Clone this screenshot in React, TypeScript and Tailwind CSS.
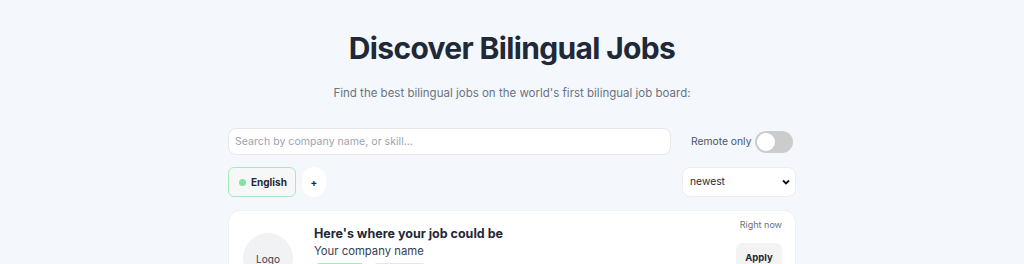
import React from "react";

export default function App() {
  return (
    <div className="min-h-screen bg-[#f4f8fc] pt-[30px]" style={{ fontFamily: "Inter, 'Noto Sans', sans-serif" }}>
      <h1 className="text-center text-[30px] leading-[36px] font-bold tracking-[-0.022em] text-[#1f2937]">Discover Bilingual Jobs</h1>
      <p className="mt-[17px] text-center text-[11.5px] leading-[20px] text-[#6b7280]">
        Find the best bilingual jobs on the world's first bilingual job board:
      </p>
      <div className="mx-auto mt-[25px] w-[568px]">
        <div className="flex items-center">
          <input
            className="h-[27px] w-[443px] rounded-lg border border-[#e5e7eb] bg-white px-[6px] text-[10.6px] text-[#374151] placeholder:text-[#9ca3af] outline-none"
            placeholder="Search by company name, or skill..."
          />
          <span className="ml-[20px] text-[10.3px] text-[#4b5563]">Remote only</span>
          <div className="ml-[4px] flex h-[22px] w-[38px] items-center rounded-full bg-[#cccccc] px-[2px]">
            <div className="h-[18px] w-[18px] rounded-full bg-white" />
          </div>
        </div>
        <div className="mt-[12px] flex items-center">
          <div className="flex h-[30px] w-[68px] items-center gap-[5px] rounded-md border border-[#a7e9bd] bg-[#f7f7f7] pl-[10px]">
            <span className="h-[7px] w-[7px] rounded-full bg-[#86e0a4]" />
            <span className="text-[10px] font-bold text-[#1f2937]">English</span>
          </div>
          <button className="ml-[6px] flex h-[30px] w-[24px] items-center justify-center rounded-full bg-white text-[10px] font-bold text-[#1f2937]">+</button>
          <div className="flex-1" />
          <div className="flex h-[30px] w-[114px] items-center justify-between rounded-lg border border-[#eeeeee] bg-white pl-[7px] pr-[4px]">
            <span className="text-[10.3px] text-[#1f2937]">newest</span>
            <svg width="10" height="10" viewBox="0 0 10 10"><path d="M2 3.5 L5 6.5 L8 3.5" fill="none" stroke="#111" strokeWidth="1.8" /></svg>
          </div>
        </div>
        <div className="mt-[13px] rounded-xl border border-[#eef0f2] bg-white">
          <div className="flex pl-[14px] pr-[13px] pt-[8px]">
            <div className="mt-[14px] flex h-[50px] w-[50px] items-center justify-center rounded-full bg-[#f1f2f4] pt-[2px]">
              <span className="text-[10px] text-[#374151]">Logo</span>
            </div>
            <div className="ml-[21px] mt-[7px] flex-1">
              <div className="text-[12.5px] font-bold leading-[16px] text-[#1f2937]">Here's where your job could be</div>
              <div className="mt-[1px] text-[11.3px] leading-[16px] text-[#374151]">Your company name</div>
              <div className="mt-[4px] flex gap-[9px] pl-[2px]">
                <span className="h-[10px] w-[48px] rounded-t bg-[#a7e9bd]" />
                <span className="h-[10px] w-[53px] rounded-t border border-[#e5e7eb] bg-[#f7f7f7]" />
              </div>
            </div>
            <div className="flex flex-col items-end">
              <span className="text-[9px] leading-[12px] text-[#6b7280]">Right now</span>
              <button className="mt-[12px] flex h-[30px] w-[46px] items-center justify-center rounded-md bg-[#f3f3f3] text-[9.5px] font-bold text-[#1f2937]">Apply</button>
            </div>
          </div>
          <div className="h-[40px]" />
        </div>
      </div>
    </div>
  );
}
